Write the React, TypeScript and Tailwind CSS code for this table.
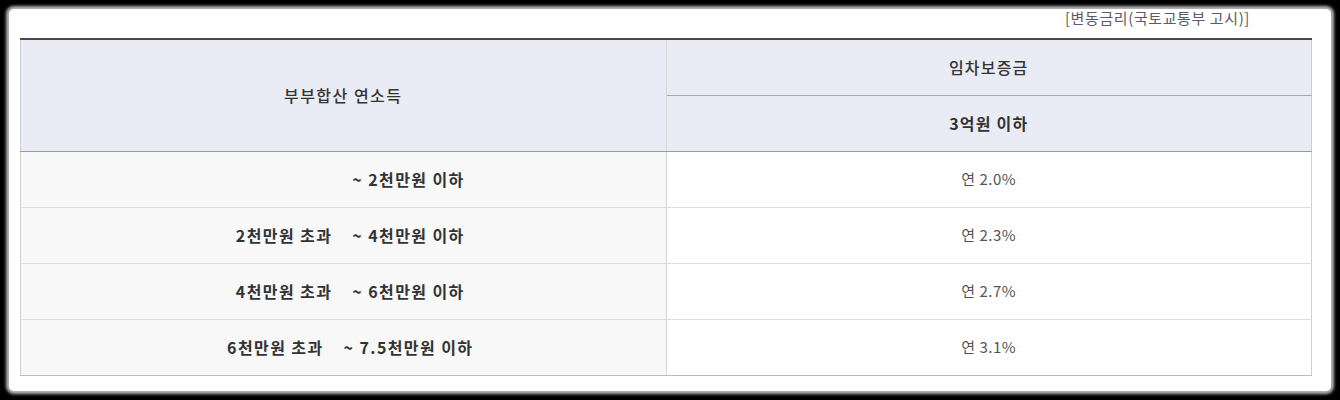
import React from 'react';

const rows = [
  { from: '2천만원 초과', to: '~ 2천만원 이하', rate: '연 2.0%', hideFrom: true },
  { from: '2천만원 초과', to: '~ 4천만원 이하', rate: '연 2.3%' },
  { from: '4천만원 초과', to: '~ 6천만원 이하', rate: '연 2.7%' },
  { from: '6천만원 초과', to: '~ 7.5천만원 이하', rate: '연 3.1%' },
];

export default function App() {
  return (
    <div
      className="w-[1340px] h-[400px] bg-black p-[9px]"
      style={{ fontFamily: '"Noto Sans CJK KR", "Noto Sans", sans-serif' }}
    >
      <div className="w-full h-full bg-white rounded-[5px] shadow-[0_0_3px_3px_rgba(200,200,200,0.9)] pl-[11px] pr-[19px] pt-[1px]">
        {/* source note */}
        <div className="h-[15px] mb-[13px] flex items-center justify-end pr-[62px] text-[15px] tracking-[0.6px] text-[#5c5c66] leading-none">
          [변동금리(국토교통부 고시)]
        </div>

        <table className="w-full border-collapse table-fixed text-[#333]">
          <colgroup>
            <col className="w-1/2" />
            <col className="w-1/2" />
          </colgroup>
          <thead>
            <tr className="h-[56px]">
              <th
                rowSpan={2}
                className="bg-[#e9ecf4] border-t-2 border-t-[#4f4543] border-l border-l-[#cfcfcf] border-r border-r-[#d6d6d6] border-b border-b-[#999] text-[16px] tracking-[1.5px] font-medium"
              >
                부부합산 연소득
              </th>
              <th className="bg-[#e9ecf4] border-t-2 border-t-[#4f4543] border-r border-r-[#cfcfcf] border-b border-b-[#aaa] text-[16px] tracking-[1.2px] font-medium">
                임차보증금
              </th>
            </tr>
            <tr className="h-[56px]">
              <th className="bg-[#e9ecf4] border-r border-r-[#cfcfcf] border-b border-b-[#999] text-[16px] tracking-[1.2px] font-bold">
                3억원 이하
              </th>
            </tr>
          </thead>
          <tbody>
            {rows.map((r, i) => (
              <tr key={i} className="h-[56px]">
                <td
                  className={
                    'bg-[#f8f8f8] border-l border-l-[#cfcfcf] border-r border-r-[#d6d6d6] pl-[14px] text-center text-[16px] tracking-[1.4px] font-bold ' +
                    (i === rows.length - 1 ? 'border-b border-b-[#bbb]' : 'border-b border-b-[#ddd]')
                  }
                >
                  <span className={r.hideFrom ? 'invisible' : ''}>{r.from}</span>
                  <span className="inline-block w-[20px]" />
                  <span>{r.to}</span>
                </td>
                <td
                  className={
                    'bg-white border-r border-r-[#cfcfcf] text-center text-[15px] tracking-[0.5px] text-[#555] ' +
                    (i === rows.length - 1 ? 'border-b border-b-[#bbb]' : 'border-b border-b-[#ddd]')
                  }
                >
                  {r.rate}
                </td>
              </tr>
            ))}
          </tbody>
        </table>
      </div>
    </div>
  );
}
